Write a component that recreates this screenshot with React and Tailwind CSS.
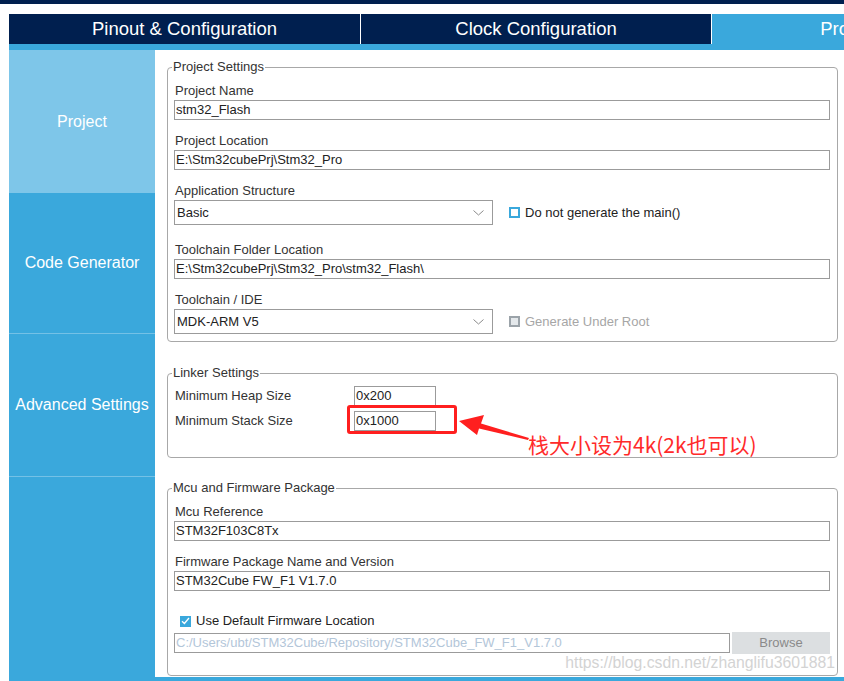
import React from "react";

const NAVY = "bg-[#001f4f]";

function Label({ children, className = "" }) {
  return (
    <div className={`text-[13px] leading-[18px] text-[#333] pl-[1px] ${className}`}>
      {children}
    </div>
  );
}

function TextInput({ value, className = "" }) {
  return (
    <div
      className={`h-[20px] border border-[#9b9b9b] bg-white pl-[1px] text-[13px] leading-[18px] text-[#222] whitespace-nowrap overflow-hidden ${className}`}
    >
      {value}
    </div>
  );
}

function Select({ value }) {
  return (
    <div className="h-[25px] w-[319px] border border-[#9b9b9b] bg-white flex items-center justify-between pl-[2px] pr-[8px]">
      <span className="text-[13px] text-[#222]">{value}</span>
      <svg width="11" height="6" viewBox="0 0 11 6">
        <polyline points="0.5,0.5 5.5,5 10.5,0.5" fill="none" stroke="#8a8a8a" strokeWidth="1" />
      </svg>
    </div>
  );
}

function Check({ label, state }) {
  let box;
  if (state === "checked") {
    box = (
      <div className="w-[11px] h-[11px] bg-[#3aa8dc] flex items-center justify-center">
        <svg width="9" height="8" viewBox="0 0 9 8">
          <polyline points="1,4.2 3.4,6.5 8,1" fill="none" stroke="#fff" strokeWidth="1.3" />
        </svg>
      </div>
    );
  } else if (state === "disabled") {
    box = <div className="w-[11px] h-[11px] border-2 border-[#9ba3a9] bg-[#e4e8eb]" />;
  } else {
    box = <div className="w-[11px] h-[11px] border-2 border-[#3aa8dc] bg-white" />;
  }
  return (
    <div className="flex items-center gap-[5px]">
      {box}
      <span
        className={`text-[13px] leading-[18px] ${state === "disabled" ? "text-[#a6a6a6]" : "text-[#222]"}`}
      >
        {label}
      </span>
    </div>
  );
}

function Group({ title, children, className = "" }) {
  return (
    <fieldset
      className={`border border-[#a8a8a8] rounded-[4px] pl-[6px] pr-[7px] ${className}`}
    >
      <legend className="-ml-[2px] px-[1px] text-[13px] leading-[18px] text-[#333]">{title}</legend>
      {children}
    </fieldset>
  );
}

function SideItem({ label, active, className = "" }) {
  return (
    <div
      className={`flex items-center justify-center text-[16px] text-white ${
        active ? "bg-[#7ec6e9]" : "bg-[#3aa8dc]"
      } ${className}`}
    >
      {label}
    </div>
  );
}

export default function App() {
  return (
    <div
      className="relative w-[844px] h-[681px] overflow-hidden bg-white"
      style={{ fontFamily: '"Liberation Sans", Arial, sans-serif' }}
    >
      <div className={`h-[4px] ${NAVY}`} />
      <div className="h-[10px]" />

      {/* tabs */}
      <div className="flex h-[30px] pl-[9px] text-[18.5px] text-white">
        <div className={`w-[352px] shrink-0 ${NAVY} border-r border-white flex items-center justify-center`}>
          Pinout &amp; Configuration
        </div>
        <div className={`w-[351px] shrink-0 ${NAVY} border-r border-white flex items-center justify-center`}>
          Clock Configuration
        </div>
        <div className="w-[352px] shrink-0 bg-[#3aa8dc] flex items-center justify-center">
          Project Manager
        </div>
      </div>
      <div className="h-[6px] ml-[9px] bg-[#3aa8dc]" />

      {/* body */}
      <div className="flex h-[627px] pl-[9px]">
        <div className="w-[146px] shrink-0 flex flex-col bg-[#3aa8dc]">
          <SideItem label="Project" active className="h-[143px]" />
          <SideItem label="Code Generator" className="h-[140px]" />
          <div className="h-px bg-[#74c1e6]" />
          <SideItem label="Advanced Settings" className="h-[142px]" />
          <div className="h-px bg-[#74c1e6]" />
        </div>

        <div className="flex-1 pl-[12px] pr-[6px] pt-[8px]">
          <Group title="Project Settings" className="pb-[7px]">
            <Label className="mt-[6px]">Project Name</Label>
            <TextInput value="stm32_Flash" />
            <Label className="mt-[12px]">Project Location</Label>
            <TextInput value="E:\Stm32cubePrj\Stm32_Pro" />
            <Label className="mt-[12px]">Application Structure</Label>
            <div className="flex items-center">
              <Select value="Basic" />
              <div className="ml-[16px]">
                <Check label="Do not generate the main()" />
              </div>
            </div>
            <Label className="mt-[16px]">Toolchain Folder Location</Label>
            <TextInput value="E:\Stm32cubePrj\Stm32_Pro\stm32_Flash\" />
            <Label className="mt-[12px]">Toolchain / IDE</Label>
            <div className="flex items-center">
              <Select value="MDK-ARM V5" />
              <div className="ml-[16px]">
                <Check label="Generate Under Root" state="disabled" />
              </div>
            </div>
          </Group>

          <Group title="Linker Settings" className="mt-[22px] pb-[26px]">
            <div className="mt-[4px] flex items-center">
              <Label className="w-[180px]">Minimum Heap Size</Label>
              <TextInput value="0x200" className="w-[82px]" />
            </div>
            <div className="mt-[5px] flex items-center">
              <Label className="w-[180px]">Minimum Stack Size</Label>
              <div className="relative">
                <TextInput value="0x1000" className="w-[82px]" />
                <div className="absolute left-[-7px] top-[-6px] w-[110px] h-[29px] border-[3px] border-[#ff1f1f] rounded-[3px]" />
              </div>
            </div>
          </Group>

          <Group title="Mcu and Firmware Package" className="mt-[21px] pb-[21px]">
            <Label className="mt-[6px]">Mcu Reference</Label>
            <TextInput value="STM32F103C8Tx" />
            <Label className="mt-[12px]">Firmware Package Name and Version</Label>
            <TextInput value="STM32Cube FW_F1 V1.7.0" />
            <div className="mt-[21px] pl-[6px]">
              <Check label="Use Default Firmware Location" state="checked" />
            </div>
            <div className="mt-[2px] flex items-center gap-[2px]">
              <div className="w-[556px] h-[20px] border border-[#9b9b9b] pl-[1px] text-[13px] leading-[18px] text-[#b3c6d9] whitespace-nowrap overflow-hidden">
                C:/Users/ubt/STM32Cube/Repository/STM32Cube_FW_F1_V1.7.0
              </div>
              <div className="w-[98px] h-[22px] bg-[#dcdfe1] flex items-center justify-center text-[13px] text-[#8a8a8a]">
                Browse
              </div>
            </div>
          </Group>
        </div>
      </div>
      <div className="h-[4px] ml-[9px] bg-[#3aa8dc]" />

      {/* annotation arrow */}
      <svg className="absolute left-0 top-0 pointer-events-none" width="844" height="681">
        <polygon
          points="459,421 484,415 481,423.5 529,438 528,440 479,428.5 477,435"
          fill="#ff1f1f"
        />
      </svg>
      <div
        className="absolute left-[528px] top-[430px] text-[21px] leading-[28px] text-[#ff2a2a] whitespace-nowrap"
        style={{ fontFamily: '"Noto Sans CJK SC", "Microsoft YaHei", sans-serif' }}
      >
        栈大小设为4k(2k也可以)
      </div>

      {/* watermark */}
      <div className="absolute right-[9px] top-[653px] text-[15.75px] leading-[20px] text-[#d3d3d3] whitespace-nowrap">
        https://blog.csdn.net/zhanglifu3601881
      </div>
    </div>
  );
}
